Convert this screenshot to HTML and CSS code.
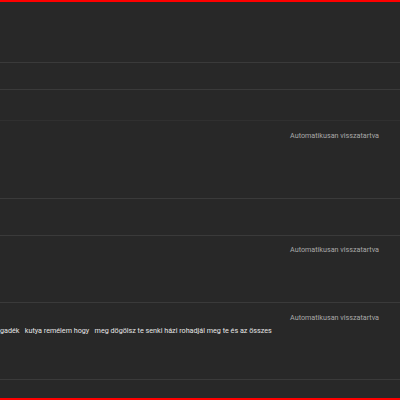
FILE: index.html
```html
<!DOCTYPE html>
<html lang="hu">
<head>
<meta charset="utf-8">
<title>Hozzászólások</title>
<link rel="stylesheet" href="styles.css">
</head>
<body>
<div class="frame">
  <div class="list">
    <div class="row r1"></div>
    <div class="row r2"></div>
    <div class="row r3 soft"></div>
    <div class="row r4">
      <div class="status">Automatikusan visszatartva</div>
    </div>
    <div class="row r5"></div>
    <div class="row r6">
      <div class="status">Automatikusan visszatartva</div>
    </div>
    <div class="row r7">
      <div class="status">Automatikusan visszatartva</div>
      <div class="comment">gadék&nbsp;&nbsp; kutya remélem hogy &nbsp; meg dögölsz te senki házi rohadjál meg te és az összes</div>
    </div>
    <div class="row r8"></div>
  </div>
</div>
</body>
</html>
```
FILE: styles.css
```css
html, body {
  margin: 0;
  padding: 0;
  background: #282828;
}

.frame {
  width: 400px;
  height: 400px;
  box-sizing: border-box;
  border-top: 2px solid #ff0000;
  border-bottom: 2px solid #ff0000;
  background: #282828;
  font-family: Roboto, "Noto Sans", sans-serif;
  overflow: hidden;
}

.list {
  display: flex;
  flex-direction: column;
}

.row {
  box-sizing: border-box;
  border-bottom: 1px solid #3a3a3a;
  display: flex;
  flex-direction: column;
}

.row.soft {
  border-bottom-color: #303030;
}

.r1 { height: 61px; }
.r2 { height: 27px; }
.r3 { height: 31px; }
.r4 { height: 78px; }
.r5 { height: 37px; }
.r6 { height: 67px; }
.r7 { height: 77px; }
.r8 { height: 20px; border-bottom: none; }

.status {
  align-self: flex-end;
  margin: 10px 21px 0 0;
  font-size: 7.2px;
  line-height: 10px;
  color: #a8a8a8;
  white-space: nowrap;
}

.r6 .status {
  margin-top: 9px;
}

.comment {
  margin-top: 3px;
  font-size: 7.2px;
  line-height: 10px;
  color: #e6e6e6;
  white-space: nowrap;
}
```
